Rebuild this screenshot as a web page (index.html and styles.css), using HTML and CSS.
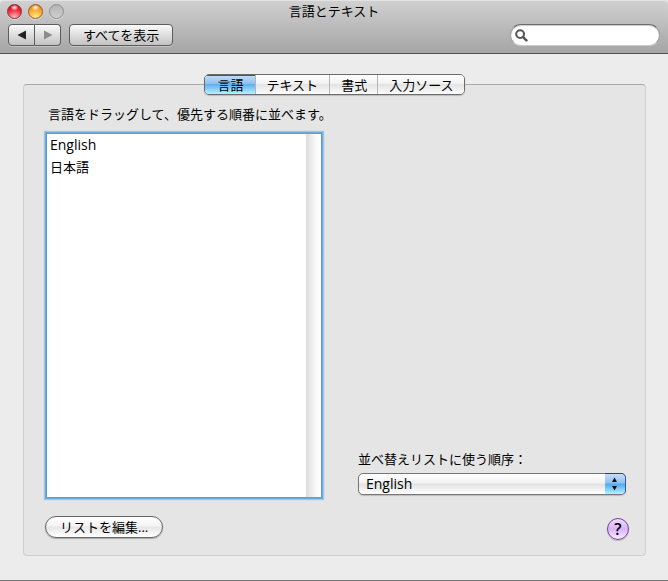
FILE: index.html
```html
<!DOCTYPE html>
<html lang="ja">
<head>
<meta charset="utf-8">
<meta name="viewport" content="width=device-width, initial-scale=1">
<title>言語とテキスト</title>
<link rel="stylesheet" href="styles.css">
</head>
<body>
<div class="window">
  <header class="chrome">
    <div class="titlebar">
      <div class="lights">
        <button class="light light-close" type="button" aria-label="閉じる"></button>
        <button class="light light-minimize" type="button" aria-label="しまう"></button>
        <button class="light light-zoom" type="button" aria-label="拡大" disabled></button>
      </div>
      <h1 class="title">言語とテキスト</h1>
    </div>
    <div class="toolbar">
      <div class="nav">
        <button class="nav-button" type="button" aria-label="戻る">
          <svg width="10" height="10" viewBox="0 0 10 10"><path d="M9 0.5v9L0.5 5z" fill="#222"/></svg>
        </button>
        <button class="nav-button" type="button" aria-label="進む" disabled>
          <svg width="10" height="10" viewBox="0 0 10 10"><path d="M1 0.5v9L9.500 5z" fill="#8c8c8c"/></svg>
        </button>
      </div>
      <button class="show-all" type="button">すべてを表示</button>
      <label class="search">
        <svg width="13" height="13" viewBox="0 0 14 14" fill="none" stroke="#565656"><circle cx="5.500" cy="5.500" r="4.200" stroke-width="2.200"/><path d="M8.700 8.700l3.600 3.600" stroke-width="2.700" stroke-linecap="round"/></svg>
        <input class="search-input" type="search" aria-label="検索">
      </label>
    </div>
  </header>

  <main class="content">
    <div class="tabs" role="tablist">
      <button class="tab tab-selected" type="button" role="tab" aria-selected="true">言語</button>
      <button class="tab" type="button" role="tab" aria-selected="false">テキスト</button>
      <button class="tab" type="button" role="tab" aria-selected="false">書式</button>
      <button class="tab" type="button" role="tab" aria-selected="false">入力ソース</button>
    </div>
    <section class="panel" role="tabpanel">
      <p class="hint" id="hint">言語をドラッグして、優先する順番に並べます。</p>
      <div class="columns">
        <ul class="languages" role="listbox" aria-labelledby="hint" tabindex="0">
          <li class="language" role="option" lang="en">English</li>
          <li class="language" role="option">日本語</li>
        </ul>
        <div class="order">
          <label class="order-label" for="order">並べ替えリストに使う順序：</label>
          <div class="popup">
            <select class="popup-select" id="order">
              <option lang="en">English</option>
              <option>日本語</option>
            </select>
            <svg class="popup-arrows" width="20" height="20" viewBox="0 0 20 20" aria-hidden="true"><path d="M7 8L9.500 3.500 12 8zM7 12h5l-2.500 4.500z" fill="#111"/></svg>
          </div>
        </div>
      </div>
      <footer class="actions">
        <button class="edit" type="button">リストを編集...</button>
        <button class="help" type="button" aria-label="ヘルプ">?</button>
      </footer>
    </section>
  </main>
</div>
</body>
</html>
```

FILE: styles.css
```css
* {
  box-sizing: border-box;
}

body {
  margin: 0;
  font: 13px/20px "Open Sans", "Noto Sans CJK JP", sans-serif;
  color: #000;
  background: #ececec;
}

button,
input,
select {
  margin: 0;
  padding: 0;
  font: inherit;
  color: inherit;
}

.window {
  display: flex;
  flex-direction: column;
  min-height: 100vh;
  border-bottom: 1px solid #777;
}

.chrome {
  height: 54px;
  background: linear-gradient(#d0d0d0, #a5a5a5);
  border-top: 1px solid #e2e2e2;
  border-bottom: 1px solid #515151;
  border-radius: 4px 4px 0 0;
}

.titlebar {
  display: grid;
  grid-template-columns: 1fr auto 1fr;
  align-items: center;
  height: 20px;
  padding: 0 7px;
}

.lights {
  display: flex;
  gap: 6px;
}

.light {
  width: 15px;
  height: 15px;
  border: 1px solid #8a3030;
  border-radius: 50%;
  box-shadow: 0 1px 0 #ddd;
}

.light-close {
  background:
    radial-gradient(ellipse 4px 3px at 50% 20%, #fff, transparent),
    radial-gradient(circle at 50% 100%, #ffc8c8, #f0263a 60%, #c40018);
}

.light-minimize {
  border-color: #a0562c;
  background:
    radial-gradient(ellipse 4px 3px at 50% 20%, #fff, transparent),
    radial-gradient(circle at 50% 100%, #fff590, #f9a52c 60%, #d76a15);
}

.light-zoom {
  border-color: #8e8e8e;
  background: linear-gradient(#b4b4b4, #cfcfcf);
}

.title {
  margin: 0;
  font-size: 13px;
  font-weight: 400;
  line-height: 18px;
}

.toolbar {
  display: flex;
  align-items: center;
  gap: 8px;
  height: 28px;
  padding: 0 8px;
}

.nav {
  display: flex;
}

.nav-button,
.show-all {
  height: 22px;
  background: linear-gradient(#fafafa, #c2c2c2);
  border: 1px solid #5c5c5c;
  border-radius: 4px;
  box-shadow: 0 1px 0 #c4c4c4;
}

.nav-button {
  display: flex;
  align-items: center;
  justify-content: center;
  width: 27px;
}

.nav-button:first-child {
  border-radius: 4px 0 0 4px;
}

.nav-button:last-child {
  border-left: 0;
  border-radius: 0 4px 4px 0;
  width: 26px;
}

.show-all {
  padding: 0 13px;
  line-height: 18px;
}

.search {
  display: flex;
  align-items: center;
  gap: 4px;
  width: 150px;
  height: 22px;
  margin-left: auto;
  padding: 0 10px 0 4px;
  background: #fff;
  border: 1px solid #a0a0a0;
  border-top-color: #6c6c6c;
  border-bottom-color: #ccc;
  border-radius: 11px;
  box-shadow: inset 0 1px 1px #ccc;
}

.search-input {
  flex: 1;
  min-width: 0;
  height: 18px;
  border: 0;
  outline: 0;
  background: none;
}

.content {
  flex: 1;
  display: flex;
  flex-direction: column;
  padding: 20px 22px 24px 23px;
}

.tabs {
  z-index: 1;
  align-self: center;
  display: flex;
  height: 21px;
  border: 1px solid #6b6b6b;
  border-radius: 5px;
  overflow: hidden;
  box-shadow: 0 1px 1px #bbb;
}

.tab {
  padding: 0 11px;
  line-height: 18px;
  border: 0;
  border-left: 1px solid #b5b5b5;
  background: linear-gradient(#fff, #f2f2f2 45%, #e4e4e4 50%, #fbfbfb);
}

.tab + .tab + .tab {
  padding: 0 10px 0 11px;
}

.tab-selected {
  padding: 0 11px 0 12px;
  border-left: 0;
  background: linear-gradient(#c6def6, #8fc1f0 45%, #64aeee 50%, #b0f4ff);
  box-shadow: inset 0 1px 0 #4848a8;
}

.panel {
  flex: 1;
  display: flex;
  flex-direction: column;
  margin-top: -11px;
  padding: 19px 16px 15px 21px;
  background: #e5e5e5;
  border: 1px solid #cfcfcf;
  border-top-color: #a9a9a9;
  border-radius: 4px;
}

.hint {
  margin: 0 0 9px 3px;
}

.columns {
  flex: 1;
  display: grid;
  grid-template-columns: 276fr 268fr;
  gap: 36px;
  padding: 0 3px 0 1px;
}

.languages {
  margin: 0;
  padding: 0;
  list-style: none;
  border: 1px solid #5e9ed2;
  outline: 0;
  box-shadow: 0 0 0 1px #6cabdf, 0 0 1px 2px #9cc5e8;
  background: linear-gradient(to right, #dcdcdc, #f7f7f7 60%, #fff) right / 15px 100% no-repeat #fff;
}

.language {
  padding: 0 3px;
  line-height: 22px;
}

.language:lang(en),
.popup-select {
  font-size: 14px;
}

.order {
  display: flex;
  flex-direction: column;
  justify-content: flex-end;
  gap: 4px;
  padding-bottom: 3px;
}

.popup {
  position: relative;
}

.popup-select {
  appearance: none;
  display: block;
  width: 100%;
  height: 22px;
  padding: 0 26px 0 7px;
  line-height: 20px;
  border: 1px solid #777;
  border-radius: 5px;
  background: linear-gradient(#fff, #f2f2f2 45%, #e2e2e2 50%, #fff);
  box-shadow: 0 1px 1px #bbb;
}

.popup-arrows {
  position: absolute;
  top: 1px;
  right: 1px;
  border-radius: 0 4px 4px 0;
  background: linear-gradient(#c6def6, #8fc1f0 45%, #54a6ee 50%, #b0f4ff);
  box-shadow: 0 -1px 0 #35359a, 1px 0 0 #385a9a;
  pointer-events: none;
}

.actions {
  display: flex;
  align-items: flex-start;
  justify-content: space-between;
  height: 24px;
  margin-top: 18px;
}

.edit {
  height: 22px;
  padding: 0 14px;
  line-height: 18px;
  border: 1px solid #666;
  border-radius: 11px;
  background: linear-gradient(#fff, #f4f4f4 45%, #e6e6e6 50%, #fff);
  box-shadow: 0 1px 1px #aaa;
}

.help {
  align-self: flex-end;
  width: 22px;
  height: 22px;
  font-size: 16px;
  font-weight: 600;
  line-height: 20px;
  border: 1px solid #78419a;
  border-radius: 50%;
  background: linear-gradient(#f0dcff, #d8b4fa 50%, #fbeaff);
  box-shadow: 0 1px 1px #bbb;
}
```
